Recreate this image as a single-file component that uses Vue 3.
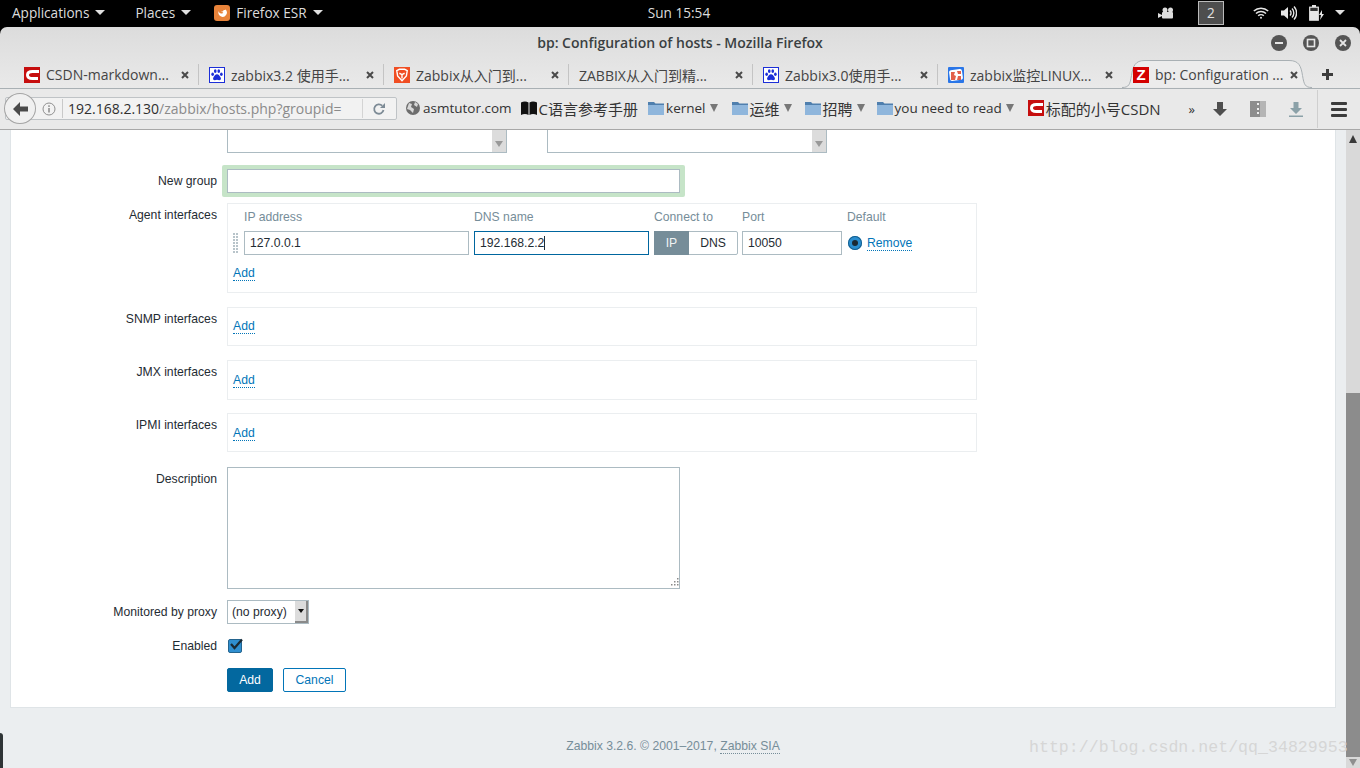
<template>
  <div class="desktop">
    <!-- gnome top bar -->
    <header class="topbar">
      <div class="top-left">
        <span class="top-item apps">Applications <i class="caret"></i></span>
        <span class="top-item places">Places <i class="caret"></i></span>
        <span class="top-item ffx">
          <svg viewBox="0 0 16 16" width="16" height="16">
            <rect width="16" height="16" rx="3" fill="#e8833a" />
            <path d="M11.5 4.5a4.2 4.2 0 1 1-6.8 1.6c.2 1.3 1 2.4 2.6 2.4 1.2 0 1.8-.6 1.9-1.3-.8.3-1.8 0-2-.7 1 .2 2.6-.3 2.3-1.6.6.2 1.500.200 2-.4z" fill="#fff" />
          </svg>
          Firefox ESR <i class="caret"></i>
        </span>
      </div>
      <div class="clock">Sun 15:54</div>
      <div class="top-right">
        <svg class="tray-cam" viewBox="0 0 16 12" width="16" height="12">
          <circle cx="7" cy="3" r="2.500" fill="#ddd" /><circle cx="12.500" cy="3" r="2.500" fill="#ddd" />
          <rect x="4" y="5" width="11" height="6.500" rx="1" fill="#ddd" />
          <path d="M0 6l4 2v1l-4 2z" fill="#ddd" />
        </svg>
        <span class="workspace">2</span>
        <svg class="tray-wifi" viewBox="0 0 16 12" width="16" height="12" fill="none" stroke="#e6e6e6" stroke-width="1.500">
          <path d="M.8 4a10.500 10.500 0 0 1 14.400 0M3 6.500a7.200 7.200 0 0 1 10 0M5.200 8.800a4 4 0 0 1 5.600 0" />
          <circle cx="8" cy="10.800" r="1" fill="#e6e6e6" stroke="none" />
        </svg>
        <svg class="tray-vol" viewBox="0 0 16 16" width="16" height="16" fill="none" stroke="#e6e6e6" stroke-width="1.400">
          <path d="M0 5.500h3l4-3.500v12l-4-3.500H0z" fill="#e6e6e6" stroke="none" />
          <path d="M9 5.500a3.500 3.500 0 0 1 0 5M11 3.500a6.500 6.500 0 0 1 0 9M13 1.500a9.500 9.500 0 0 1 0 13" />
        </svg>
        <svg class="tray-bat" viewBox="0 0 16 16" width="16" height="16">
          <rect x="3" y="0" width="4" height="2" fill="#e6e6e6" />
          <rect x=".7" y="2.200" width="8.600" height="13" fill="#333" stroke="#e6e6e6" stroke-width="1.200" />
          <rect x="1" y="6" width="8" height="9" fill="#e6e6e6" />
          <path d="M13 5l-3 5h2l-1 5 4-6h-2z" fill="#e6e6e6" />
        </svg>
        <i class="caret tray-caret"></i>
      </div>
    </header>

    <div class="window">
      <div class="titlebar">
        <span class="title">bp: Configuration of hosts - Mozilla Firefox</span>
        <div class="win-btns">
          <span class="win-btn"><svg viewBox="0 0 16 16" width="16" height="16"><rect x="4" y="7" width="8" height="2" fill="#e6e6e6" /></svg></span>
          <span class="win-btn"><svg viewBox="0 0 16 16" width="16" height="16"><rect x="4.500" y="4.500" width="7" height="7" fill="none" stroke="#e6e6e6" stroke-width="1.600" /></svg></span>
          <span class="win-btn"><svg viewBox="0 0 16 16" width="16" height="16"><path d="M5 5l6 6M11 5l-6 6" stroke="#e6e6e6" stroke-width="1.800" /></svg></span>
        </div>
      </div>

      <!-- tabs -->
      <div class="tabs">
        <div v-for="tab in tabs" :key="tab.title" class="tab" :class="{ active: tab.active, bare: !tab.icon }">
          <svg v-if="tab.active" class="tab-shape" viewBox="0 0 190 28" width="190" height="28">
            <path d="M0 27.500c7 0 8-3 9.500-12C11 6 13 .5 23 .5h144c10 0 12 5.500 13.500 15 1.500 9 2.500 12 9.500 12" fill="#ececec" stroke="#a9b0b4" />
          </svg>
          <span v-if="tab.icon === 'csdn'" class="fav fav-csdn">
            <svg viewBox="0 0 16 16" width="16" height="16"><path d="M15 4.500H8.500C5 4.500 3.500 6 3.500 8s1.500 3.500 5 3.500H14" fill="none" stroke="#fff" stroke-width="3" /></svg>
          </span>
          <span v-else-if="tab.icon === 'paw'" class="fav fav-paw">
            <svg viewBox="0 0 16 16" width="14" height="14" fill="#1c2fd8">
              <ellipse cx="3" cy="7" rx="1.500" ry="2" /><ellipse cx="6" cy="3.500" rx="1.500" ry="2.200" />
              <ellipse cx="10" cy="3.500" rx="1.500" ry="2.200" /><ellipse cx="13" cy="7" rx="1.500" ry="2" />
              <path d="M8 7c-2 0-3 2-4 3.500C3 12 3.500 14 5.500 14c1 0 1.500-.5 2.500-.5s1.500.5 2.500.5c2 0 2.500-2 1.500-3.500C11 9 10 7 8 7z" />
            </svg>
          </span>
          <span v-else-if="tab.icon === 'lion'" class="fav fav-lion">
            <svg viewBox="0 0 16 16" width="14" height="14" fill="none" stroke="#fff" stroke-width="1.600">
              <path d="M2 3l3-1.500h6L14 3l-1 6-5 5.500L3 9zM5 6l3 1.500L11 6M8 7.500V12" />
            </svg>
          </span>
          <span v-else-if="tab.icon === 'cto'" class="fav fav-cto">
            <svg viewBox="0 0 16 16" width="16" height="16">
              <rect x="1.500" y="2.500" width="13" height="11" rx="2" fill="#fff" transform="rotate(-8 8 8)" />
              <path d="M3 5h4l-1 3 2 1-1 4H3zM9 4h4v3h-3zM10 9h3v4h-4z" fill="#e2604a" />
            </svg>
          </span>
          <span v-else-if="tab.icon === 'z'" class="fav fav-z">Z</span>
          <span class="tab-text">{{ tab.title }}</span>
          <svg class="tab-x" viewBox="0 0 8 8" width="8" height="8"><path d="M1 1l6 6M7 1L1 7" stroke="#4a4a4a" stroke-width="2" /></svg>
        </div>
        <svg class="tab-plus" viewBox="0 0 11 11" width="11" height="11"><path d="M4 0h3v4h4v3H7v4H4V7H0V4h4z" fill="#3c3c3c" /></svg>
      </div>

      <!-- nav bar -->
      <nav class="navbar">
        <div class="urlbar">
          <span class="back">
            <svg viewBox="0 0 15 14" width="15" height="14"><path d="M7 0L0 7l7 7v-4.500h8v-5H7z" fill="#4a4a4a" /></svg>
          </span>
          <svg class="info" viewBox="0 0 14 14" width="14" height="14" fill="none">
            <circle cx="7" cy="7" r="6" stroke="#8f8f8f" />
            <rect x="6.200" y="6" width="1.600" height="4.500" fill="#8f8f8f" /><rect x="6.200" y="3.300" width="1.600" height="1.600" fill="#8f8f8f" />
          </svg>
          <span class="url"><b>192.168.2.130</b>/zabbix/hosts.php?groupid=</span>
          <svg class="reload" viewBox="0 0 14 14" width="14" height="14" fill="none">
            <path d="M11.500 8a4.700 4.700 0 1 1-1.300-4.300" stroke="#7d8b96" stroke-width="1.800" />
            <path d="M8 6h5V1z" fill="#7d8b96" />
          </svg>
        </div>

        <div class="bookmarks">
          <span v-for="bm in bookmarks" :key="bm.label" class="bm" :class="bm.cls">
            <svg v-if="bm.icon === 'globe'" viewBox="0 0 14 14" width="14" height="14">
              <circle cx="7" cy="7" r="7" fill="#6d6d6d" />
              <path d="M3 2l3 1-1 3 3 2-1 4-3-3-3-1zM9 1l3 2-1 3-3-2z" fill="#d8d8d8" />
            </svg>
            <svg v-else-if="bm.icon === 'book'" viewBox="0 0 16 14" width="16" height="14">
              <path d="M0 1.500C2.500 0 5.500 0 7.500 1.500V14C5.500 12.500 2.500 12.500 0 14zM16 1.500C13.500 0 10.500 0 8.500 1.500V14c2-1.500 5-1.500 7.500 0z" fill="#111" />
            </svg>
            <svg v-else-if="bm.icon === 'folder'" viewBox="0 0 16 14" width="16" height="14">
              <path d="M0 1h6l1.500 1.500H16V14H0z" fill="#4f7fae" />
              <rect y="4" width="16" height="10" fill="#8fb6dc" />
            </svg>
            <span v-else-if="bm.icon === 'csdn'" class="fav fav-csdn">
              <svg viewBox="0 0 16 16" width="16" height="16"><path d="M15 4.500H8.500C5 4.500 3.500 6 3.500 8s1.500 3.500 5 3.500H14" fill="none" stroke="#fff" stroke-width="3" /></svg>
            </span>
            <span class="bm-label">{{ bm.label }}</span>
            <i v-if="bm.menu" class="bm-caret"></i>
          </span>
        </div>

        <div class="nav-tools">
          <span class="chevrons">»</span>
          <svg class="tool-down" viewBox="0 0 14 14" width="14" height="14"><path d="M4 0h6v7h4l-7 7-7-7h4z" fill="#4f4f4f" /></svg>
          <span class="tool-box"><i></i></span>
          <svg class="tool-dl" viewBox="0 0 14 15" width="14" height="15"><path d="M4.500 0h5v6H13l-6 6-6-6h3.500z" fill="#8ba1a8" /><rect y="13.500" width="14" height="1.500" fill="#8ba1a8" /></svg>
          <span class="tool-sep"></span>
          <span class="burger"><i></i><i></i><i></i></span>
        </div>
      </nav>

      <div class="viewport">
        <main class="page">
          <section class="card">
            <div class="row groups">
              <div></div>
              <div class="listboxes">
                <div class="listbox"><span class="list-bar"></span></div>
                <div class="listbox"><span class="list-bar"></span></div>
              </div>
            </div>

            <div class="row new-group">
              <label>New group</label>
              <div class="highlight"><div class="input fill"></div></div>
            </div>

            <div class="row agent">
              <label>Agent interfaces</label>
              <div class="box agent-box">
                <div class="iface-head">
                  <span class="h-ip">IP address</span>
                  <span class="h-dns">DNS name</span>
                  <span class="h-conn">Connect to</span>
                  <span class="h-port">Port</span>
                  <span>Default</span>
                </div>
                <div class="iface-row">
                  <span class="grip"></span>
                  <div class="input w-ip">127.0.0.1</div>
                  <div class="input w-dns focused">192.168.2.2<i class="cursor"></i></div>
                  <div class="switch"><span class="on">IP</span><span>DNS</span></div>
                  <div class="input w-port">10050</div>
                  <span class="radio"><i></i></span>
                  <a class="link remove">Remove</a>
                </div>
                <a class="link add-agent">Add</a>
              </div>
            </div>

            <div class="row snmp">
              <label>SNMP interfaces</label>
              <div class="box short"><a class="link">Add</a></div>
            </div>
            <div class="row jmx">
              <label>JMX interfaces</label>
              <div class="box short"><a class="link">Add</a></div>
            </div>
            <div class="row ipmi">
              <label>IPMI interfaces</label>
              <div class="box short"><a class="link">Add</a></div>
            </div>

            <div class="row desc">
              <label>Description</label>
              <div class="textarea">
                <svg class="resize" viewBox="0 0 10 10" width="10" height="10" fill="#8a8a8a">
                  <rect x="8" y="0" width="1.500" height="1.500" /><rect x="5" y="3" width="1.500" height="1.500" /><rect x="8" y="3" width="1.500" height="1.500" />
                  <rect x="2" y="6" width="1.500" height="1.500" /><rect x="5" y="6" width="1.500" height="1.500" /><rect x="8" y="6" width="1.500" height="1.500" />
                </svg>
              </div>
            </div>

            <div class="row proxy">
              <label>Monitored by proxy</label>
              <div class="select">(no proxy)<span class="sel-btn"><i></i></span></div>
            </div>

            <div class="row enabled">
              <label>Enabled</label>
              <span class="check">
                <svg viewBox="0 0 16 14" width="16" height="14"><path d="M3 6l3.500 4L14 1.500" fill="none" stroke="#1b2a33" stroke-width="2.200" /></svg>
              </span>
            </div>

            <div class="row actions">
              <div></div>
              <div class="buttons">
                <button class="btn primary">Add</button>
                <button class="btn ghost">Cancel</button>
              </div>
            </div>
          </section>

          <footer class="footer">Zabbix 3.2.6. © 2001–2017, <a class="link foot-link">Zabbix SIA</a></footer>
        </main>

        <div class="scrollbar">
          <span class="arrow up"></span>
          <span class="thumb"></span>
          <span class="arrow down"></span>
        </div>

        <span class="watermark">http://blog.csdn.net/qq_34829953</span>
        <span class="corner"></span>
      </div>
    </div>
  </div>
</template>

<script setup>
const tabs = [
  { title: "CSDN-markdown...", icon: "csdn" },
  { title: "zabbix3.2 使用手...", icon: "paw" },
  { title: "Zabbix从入门到...", icon: "lion" },
  { title: "ZABBIX从入门到精...", icon: "" },
  { title: "Zabbix3.0使用手...", icon: "paw" },
  { title: "zabbix监控LINUX...", icon: "cto" },
  { title: "bp: Configuration ...", icon: "z", active: true },
];

const bookmarks = [
  { label: "asmtutor.com", icon: "globe", cls: "bm-asm" },
  { label: "C语言参考手册", icon: "book", cls: "bm-c cjk" },
  { label: "kernel", icon: "folder", menu: true, cls: "bm-kernel" },
  { label: "运维", icon: "folder", menu: true, cls: "bm-ops cjk" },
  { label: "招聘", icon: "folder", menu: true, cls: "bm-jobs cjk" },
  { label: "you need to read", icon: "folder", menu: true, cls: "bm-read" },
  { label: "标配的小号CSDN", icon: "csdn", cls: "bm-csdn cjk" },
];
</script>

<style>
html,
body {
  margin: 0;
  overflow: hidden;
}
</style>

<style scoped>
.desktop {
  width: 1360px;
  height: 768px;
  display: flex;
  flex-direction: column;
  overflow: hidden;
  background: #000;
  font-family: "Open Sans", "Noto Sans CJK SC", sans-serif;
}

.topbar {
  height: 27px;
  flex: none;
  display: grid;
  grid-template-columns: 1fr auto 1fr;
  align-items: center;
  box-sizing: border-box;
  padding: 0 0 2px 12px;
  color: #dcdcdc;
  font-size: 13.6px;
}
.top-left {
  display: flex;
  align-items: center;
}
.top-item {
  display: flex;
  align-items: center;
}
.places {
  margin-left: 30px;
}
.ffx {
  margin-left: 23px;
}
.ffx svg {
  margin-right: 6px;
}
.caret {
  display: inline-block;
  width: 0;
  height: 0;
  margin-left: 6px;
  border-left: 5px solid transparent;
  border-right: 5px solid transparent;
  border-top: 5px solid #e0e0e0;
}
.clock {
  margin-left: -14px;
}
.top-right {
  display: flex;
  align-items: center;
  justify-content: flex-end;
  padding-right: 15px;
}
.workspace {
  width: 24px;
  height: 22px;
  margin-left: 24px;
  border: 1px solid #bbb;
  background: #4e4e4e;
  text-align: center;
  line-height: 22px;
  color: #e0e0e0;
}
.tray-wifi {
  margin-left: 29px;
}
.tray-vol,
.tray-bat {
  margin-left: 12px;
}
.tray-caret {
  margin-left: 10px;
}

.window {
  flex: 1;
  display: flex;
  flex-direction: column;
  min-height: 0;
  border-radius: 7px 7px 0 0;
  overflow: hidden;
  background: linear-gradient(#dcdcdc, #e9e9e9 60px);
}
.titlebar {
  height: 33px;
  flex: none;
  position: relative;
  display: flex;
  align-items: center;
  justify-content: center;
}
.title {
  font-size: 14px;
  font-weight: 600;
  color: #3a3f42;
  margin-top: -3px;
}
.win-btns {
  position: absolute;
  right: 9px;
  top: 8px;
  display: flex;
  gap: 16px;
}
.win-btn {
  width: 16px;
  height: 16px;
  border-radius: 50%;
  background: #555;
  display: block;
}
.win-btn svg {
  display: block;
}

.tabs {
  height: 29px;
  flex: none;
  display: flex;
  padding-left: 14px;
  border-bottom: 1px solid #a9b0b4;
  box-sizing: border-box;
  font-size: 14px;
  color: #444;
}
.tab {
  position: relative;
  width: 185px;
  height: 21px;
  margin-top: 4px;
  display: flex;
  align-items: center;
  padding-left: 10px;
  box-sizing: border-box;
  border-right: 1px solid #c4c4c4;
  white-space: nowrap;
}
.tab.bare {
  width: 184px;
}
.tab:nth-child(6) {
  border-right: none;
}
.tab.active {
  width: 190px;
  margin-left: -1px;
  padding-left: 11px;
  border-right: none;
}
.tab-shape {
  position: absolute;
  left: 0;
  top: -4px;
}
.tab-text {
  margin-left: 6px;
  position: relative;
}
.tab.bare .tab-text {
  margin-left: 0;
}
.tab-x {
  position: absolute;
  left: 167px;
}
.tab.bare .tab-x {
  left: 166px;
}
.tab.active .tab-x {
  left: 168px;
}
.tab-plus {
  margin: 9px 0 0 10px;
}

.fav {
  width: 16px;
  height: 16px;
  flex: none;
  display: flex;
  align-items: center;
  justify-content: center;
  position: relative;
  box-sizing: border-box;
}
.fav-csdn {
  background: #c60e0e;
}
.fav-paw {
  border: 1px solid #1c2fd8;
  background: #fff;
}
.fav-lion {
  background: #f04e23;
}
.fav-cto {
  background: #2a76e8;
  border-radius: 1px;
}
.fav-z {
  background: #d40000;
  color: #fff;
  font: bold 15px "Liberation Sans", sans-serif;
  z-index: 1;
}

.navbar {
  height: 41px;
  flex: none;
  display: flex;
  align-items: center;
  background: #e9e9e9;
  border-bottom: 1px solid #a8a8a8;
  box-sizing: border-box;
  font-size: 13.5px;
  color: #333;
  padding-left: 5px;
}
.urlbar {
  width: 392px;
  height: 23px;
  margin-top: -1px;
  position: relative;
  display: flex;
  align-items: center;
  box-sizing: border-box;
  border: 1px solid #bfc3c6;
  border-radius: 2px;
  background: #f2f2f2;
  font-size: 14px;
}
.back {
  position: absolute;
  left: -2px;
  top: -5px;
  width: 32px;
  height: 31px;
  border-radius: 50%;
  border: 1px solid #a4a4a4;
  background: #f0f0f0;
  box-sizing: border-box;
  display: flex;
  align-items: center;
  justify-content: center;
}
.info {
  margin-left: 36px;
}
.url {
  margin-left: 6px;
  padding-left: 5px;
  border-left: 1px solid #c9c9c9;
  border-right: 1px solid #d4d4d4;
  color: #8b8b8b;
  width: 301px;
  line-height: 19px;
  white-space: nowrap;
  box-sizing: border-box;
}
.url b {
  font-weight: 400;
  color: #2f2f2f;
}
.reload {
  margin-left: 9px;
}

.bookmarks {
  display: flex;
  align-items: center;
  margin: -2px 0 0 9px;
}
.bm {
  display: flex;
  align-items: center;
  white-space: nowrap;
}
.bm-label {
  margin-left: 2px;
}
.bm-asm .bm-label {
  margin-left: 3px;
}
.cjk {
  font-size: 15px;
}
.bm-c {
  margin-left: 9px;
}
.bm-kernel {
  margin-left: 10px;
}
.bm-ops {
  margin-left: 14px;
}
.bm-jobs {
  margin-left: 13px;
}
.bm-read {
  margin-left: 12px;
}
.bm-csdn {
  margin-left: 14px;
}
.bm-caret {
  width: 0;
  height: 0;
  margin-left: 4px;
  border-left: 4px solid transparent;
  border-right: 4px solid transparent;
  border-top: 8px solid #777;
}

.nav-tools {
  margin-left: auto;
  display: flex;
  align-items: center;
  height: 100%;
  padding-right: 13px;
}
.chevrons {
  font-size: 13px;
  margin-right: 18px;
}
.tool-box {
  width: 16px;
  height: 16px;
  margin-left: 23px;
  background: linear-gradient(90deg, #8d8d8d 60%, #b5b5b5 60%);
  display: block;
  position: relative;
}
.tool-box i {
  position: absolute;
  left: 7px;
  top: 2px;
  height: 11px;
  border-left: 2px dotted #eee;
}
.tool-dl {
  margin-left: 23px;
}
.tool-sep {
  width: 1px;
  height: 38px;
  margin: 0 13px 0 14px;
  background: #cfcfcf;
}
.burger {
  display: flex;
  flex-direction: column;
  gap: 3px;
}
.burger i {
  display: block;
  width: 16px;
  height: 3px;
  border-radius: 1px;
  background: #3c3c3c;
}

/* scrolled page */
.viewport {
  flex: 1;
  min-height: 0;
  display: flex;
  position: relative;
  background: #ebeef0;
}
.page {
  flex: 1;
  min-width: 0;
  font: 12.2px "Liberation Sans", Arial, sans-serif;
  color: #1f2c33;
}
.card {
  margin: 0 10px;
  height: 578px;
  box-sizing: border-box;
  background: #fff;
  border: 1px solid #dfe4e7;
  border-top: none;
}
.row {
  display: grid;
  grid-template-columns: 206px 1fr;
  column-gap: 10px;
}
.row label {
  text-align: right;
  line-height: 14px;
}
.listboxes {
  display: flex;
  gap: 40px;
}
.listbox {
  width: 280px;
  height: 23px;
  box-sizing: border-box;
  border: 1px solid #acbbc2;
  border-top: none;
  display: flex;
  justify-content: flex-end;
}
.list-bar {
  width: 14px;
  background: #dcdcdc;
  position: relative;
}
.list-bar::after {
  content: "";
  position: absolute;
  left: 3px;
  bottom: 5px;
  border-left: 4px solid transparent;
  border-right: 4px solid transparent;
  border-top: 6px solid #999;
}
.new-group {
  margin-top: 12px;
  height: 32px;
  align-items: center;
}
.highlight {
  width: 463px;
  height: 32px;
  margin-left: -5px;
  padding: 4px 5px;
  box-sizing: border-box;
  background: #c6e4c8;
  border-radius: 2px;
}
.input {
  height: 24px;
  box-sizing: border-box;
  border: 1px solid #acbbc2;
  background: #fff;
  padding-left: 5px;
  line-height: 22px;
  white-space: nowrap;
}
.fill {
  width: 100%;
}
.agent {
  margin-top: 6px;
}
.agent label {
  margin-top: 5px;
}
.box {
  width: 750px;
  box-sizing: border-box;
  border: 1px solid #ebeef0;
}
.agent-box {
  height: 90px;
  padding: 6px 0 0 5px;
}
.iface-head {
  display: flex;
  height: 15px;
  line-height: 14px;
  padding-left: 11px;
  color: #768d99;
}
.h-ip {
  width: 230px;
}
.h-dns {
  width: 180px;
}
.h-conn {
  width: 88px;
}
.h-port {
  width: 105px;
}
.iface-row {
  display: flex;
  align-items: center;
  margin-top: 6px;
  gap: 5px;
}
.grip {
  width: 6px;
  height: 20px;
  background:
    linear-gradient(#fff 0 1px, transparent 1px) 0 2px / 3px 3px,
    linear-gradient(90deg, #b8c4ca 0 2px, transparent 2px) 0 0 / 3px 3px;
}
.w-ip {
  width: 225px;
}
.w-dns {
  width: 175px;
}
.w-port {
  width: 100px;
  margin-left: -1px;
}
.focused {
  border-color: #00669f;
}
.cursor {
  display: inline-block;
  width: 1px;
  height: 14px;
  vertical-align: -3px;
  background: #1f2c33;
}
.switch {
  width: 84px;
  height: 24px;
  display: flex;
  box-sizing: border-box;
  border: 1px solid #acbbc2;
  border-radius: 2px;
  line-height: 22px;
  text-align: center;
}
.switch span {
  flex: 1;
  min-width: 0;
}
.switch .on {
  flex: none;
  width: 35px;
  margin: -1px 0 -1px -1px;
  line-height: 24px;
  background: #768d99;
  color: #f0f3f4;
}
.radio {
  width: 14px;
  height: 14px;
  margin-left: 1px;
  border-radius: 50%;
  background: #2a8ed0;
  box-shadow: inset 0 0 0 1px #155f8e;
  display: flex;
  align-items: center;
  justify-content: center;
}
.radio i {
  width: 6px;
  height: 6px;
  border-radius: 50%;
  background: #1b2a33;
}
.link {
  color: #0275b8;
  border-bottom: 1px dotted #0275b8;
  line-height: 13px;
}
.remove {
  margin-top: 1px;
}
.add-agent {
  display: inline-block;
  margin-top: 12px;
}
.snmp {
  margin-top: 14px;
}
.jmx {
  margin-top: 14px;
}
.ipmi {
  margin-top: 13px;
}
.row.snmp label,
.row.jmx label,
.row.ipmi label {
  margin-top: 5px;
}
.short {
  height: 39px;
  padding: 11px 0 0 5px;
}
.jmx .short {
  height: 40px;
  padding-top: 12px;
}
.ipmi .short {
  padding-top: 12px;
}
.desc {
  margin-top: 15px;
}
.desc label {
  margin-top: 5px;
}
.textarea {
  width: 453px;
  height: 122px;
  box-sizing: border-box;
  border: 1px solid #acbbc2;
  position: relative;
}
.resize {
  position: absolute;
  right: 0;
  bottom: 0;
}
.proxy {
  margin-top: 11px;
  align-items: center;
}
.select {
  width: 82px;
  height: 24px;
  box-sizing: border-box;
  border: 1px solid #acbbc2;
  padding-left: 4px;
  line-height: 22px;
  position: relative;
}
.sel-btn {
  position: absolute;
  right: 0;
  top: 0;
  bottom: 0;
  width: 13px;
  background: #dcdcdc;
  border-right: 2px solid #8a8a8a;
  border-bottom: 2px solid #8a8a8a;
  box-sizing: border-box;
  display: flex;
  align-items: center;
  justify-content: center;
}
.sel-btn i {
  border-left: 3px solid transparent;
  border-right: 3px solid transparent;
  border-top: 4px solid #111;
}
.enabled {
  margin-top: 15px;
  align-items: center;
}
.check {
  width: 14px;
  height: 14px;
  margin-left: 1px;
  background: #2f8fd0;
  border: 1px solid #24648e;
  border-radius: 2px;
  box-sizing: border-box;
  position: relative;
}
.check svg {
  position: absolute;
  left: -1px;
  top: -2px;
}
.actions {
  margin-top: 15px;
}
.buttons {
  display: flex;
  gap: 10px;
}
.btn {
  height: 24px;
  box-sizing: border-box;
  border-radius: 2px;
  font: 12.2px "Liberation Sans", Arial, sans-serif;
  padding: 0;
}
.primary {
  width: 46px;
  background: #03689f;
  border: 1px solid #03689f;
  color: #fff;
}
.ghost {
  width: 63px;
  background: #fff;
  border: 1px solid #0275b8;
  color: #0275b8;
}
.footer {
  margin-top: 31px;
  text-align: center;
  color: #768d99;
  line-height: 14px;
}
.foot-link {
  color: #768d99;
  border-bottom-color: #768d99;
}

.scrollbar {
  width: 14px;
  flex: none;
  display: flex;
  flex-direction: column;
  background: #d9d9d9;
}
.thumb {
  display: block;
  margin-top: auto;
  height: 364px;
  background: #8c8c8c;
}
.arrow {
  display: block;
  height: 11px;
  flex: none;
  position: relative;
}
.arrow.up::after {
  content: "";
  position: absolute;
  left: 3px;
  top: 5px;
  border-left: 4px solid transparent;
  border-right: 4px solid transparent;
  border-bottom: 8px solid #3a3a3a;
}
.arrow.down::after {
  content: "";
  position: absolute;
  left: 3px;
  top: 2px;
  border-left: 4px solid transparent;
  border-right: 4px solid transparent;
  border-top: 7px solid #8f8f8f;
}
.watermark {
  position: absolute;
  left: 1029px;
  top: 608px;
  font: 16.6px "Liberation Mono", monospace;
  color: #d6d6d6;
  white-space: nowrap;
}
.corner {
  position: absolute;
  left: 0;
  bottom: 0;
  width: 3px;
  height: 35px;
  background: #2e3436;
  border-radius: 0 3px 0 0;
}
</style>
